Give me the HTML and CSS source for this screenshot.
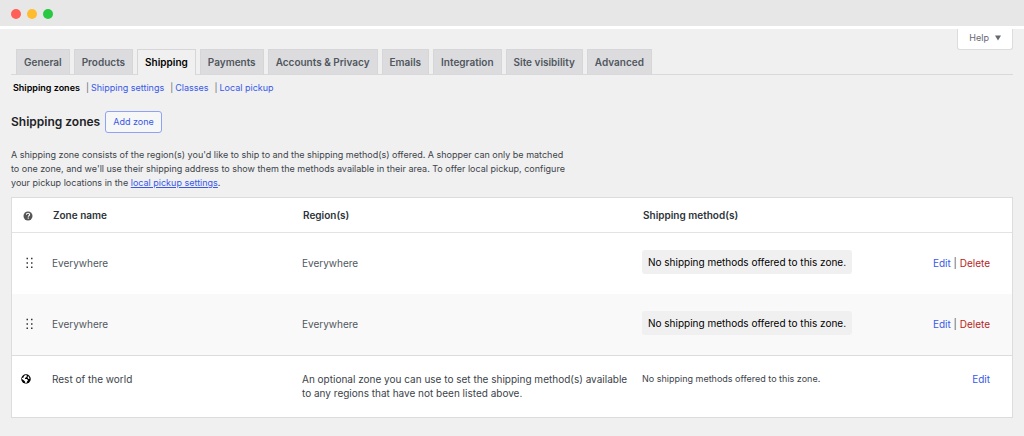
FILE: index.html
```html
<!DOCTYPE html>
<html lang="en">
<head>
    <meta charset="UTF-8">
    <meta name="viewport" content="width=device-width, initial-scale=1.0">
    <title>Shipping zones</title>
    <link rel="stylesheet" href="styles.css">
</head>
<body>

<div class="titlebar">
    <span class="dot red"></span>
    <span class="dot yellow"></span>
    <span class="dot green"></span>
</div>

<main class="page">
    <div class="screen-meta">
        <button type="button" class="help-button">Help
            <svg width="6" height="6" viewBox="0 0 6 6" aria-hidden="true"><path d="M0 0.5h6L3 5.5z" fill="currentColor"/></svg>
        </button>
    </div>

    <nav class="tabs">
        <a href="#general">General</a>
        <a href="#products">Products</a>
        <a href="#shipping" class="active">Shipping</a>
        <a href="#payments">Payments</a>
        <a href="#accounts">Accounts &amp; Privacy</a>
        <a href="#emails">Emails</a>
        <a href="#integration">Integration</a>
        <a href="#visibility">Site visibility</a>
        <a href="#advanced">Advanced</a>
    </nav>

    <ul class="subnav">
        <li><a href="#zones" class="current">Shipping zones</a></li>
        <li><a href="#settings">Shipping settings</a></li>
        <li><a href="#classes">Classes</a></li>
        <li><a href="#pickup">Local pickup</a></li>
    </ul>

    <div class="heading">
        <h2>Shipping zones</h2>
        <button type="button" class="add-button">Add zone</button>
    </div>

    <p class="intro">A shipping zone consists of the region(s) you'd like to ship to and the shipping method(s) offered. A shopper can only be matched to one zone, and we'll use their shipping address to show them the methods available in their area. To offer local pickup, configure your pickup locations in the <a href="#pickup">local pickup settings</a>.</p>

    <table class="zones">
        <thead>
            <tr>
                <th class="col-icon">
                    <svg class="help-icon" width="10" height="10" viewBox="0 0 20 20" role="img" aria-label="Help">
                        <circle cx="10" cy="10" r="9" fill="#555"/>
                        <path d="M6.800 7.600c0-2 1.400-3 3.200-3s3.200 1 3.200 2.700c0 2.200-2.700 2.200-2.700 4.400" fill="none" stroke="#fff" stroke-width="2.200"/>
                        <rect x="9.300" y="13" width="2.400" height="2.400" fill="#fff"/>
                    </svg>
                </th>
                <th class="col-name">Zone name</th>
                <th class="col-region">Region(s)</th>
                <th class="col-methods">Shipping method(s)</th>
                <th class="col-actions"></th>
            </tr>
        </thead>
        <tbody>
            <tr>
                <td class="col-icon">
                    <svg class="drag-icon" width="8" height="12" viewBox="0 0 8 12" aria-hidden="true">
                        <path d="M0.500 0.800h1.500v1.500H0.500zM5 0.800h1.500v1.500H5zM0.500 5.200h1.500v1.500H0.500zM5 5.200h1.500v1.500H5zM0.500 9.600h1.500v1.500H0.500zM5 9.600h1.500v1.500H5z" fill="#333"/>
                    </svg>
                </td>
                <td>Everywhere</td>
                <td>Everywhere</td>
                <td><span class="no-methods">No shipping methods offered to this zone.</span></td>
                <td class="col-actions"><a href="#edit">Edit</a> | <a href="#delete" class="delete">Delete</a></td>
            </tr>
            <tr class="alternate">
                <td class="col-icon">
                    <svg class="drag-icon" width="8" height="12" viewBox="0 0 8 12" aria-hidden="true">
                        <path d="M0.500 0.800h1.500v1.500H0.500zM5 0.800h1.500v1.500H5zM0.500 5.200h1.500v1.500H0.500zM5 5.200h1.500v1.500H5zM0.500 9.600h1.500v1.500H0.500zM5 9.600h1.500v1.500H5z" fill="#333"/>
                    </svg>
                </td>
                <td>Everywhere</td>
                <td>Everywhere</td>
                <td><span class="no-methods">No shipping methods offered to this zone.</span></td>
                <td class="col-actions"><a href="#edit">Edit</a> | <a href="#delete" class="delete">Delete</a></td>
            </tr>
        </tbody>
        <tfoot>
            <tr>
                <td class="col-icon">
                    <svg class="globe-icon" width="10" height="10" viewBox="0 0 20 20" aria-hidden="true">
                        <circle cx="10" cy="10" r="9.500" fill="#000"/>
                        <path d="M9 2l3 1-1 3-3 2 0 2 4 0 2 3-2 2-1 3-2 1-1-4-2-2-4-3 0-2 3-1 1-3z M14 4l2 2 1 4-2 0-2-3z" fill="#fff"/>
                    </svg>
                </td>
                <td>Rest of the world</td>
                <td>An optional zone you can use to set the shipping method(s) available to any regions that have not been listed above.</td>
                <td class="small">No shipping methods offered to this zone.</td>
                <td class="col-actions"><a href="#edit">Edit</a></td>
            </tr>
        </tfoot>
    </table>
</main>

</body>
</html>
```
FILE: styles.css
```css
* {
    box-sizing: border-box;
}

body {
    margin: 0;
    font-family: Inter, "Liberation Sans", sans-serif;
    font-size: 9px;
    line-height: 14px;
    color: #3c434a;
    background: #f0f0f0;
}

a {
    color: #3858e9;
    text-decoration: none;
}

.titlebar {
    display: flex;
    align-items: center;
    gap: 6px;
    height: 29px;
    padding: 2px 11px 0;
    background: #e7e7e7;
    border-bottom: 3px solid #fff;
}

.dot {
    width: 10px;
    height: 10px;
    border-radius: 50%;
}

.red {
    background: #ff5f57;
}

.yellow {
    background: #febc2e;
}

.green {
    background: #28c840;
}

.page {
    padding: 0 11px 18px;
}

.screen-meta {
    display: flex;
    justify-content: flex-end;
    height: 20px;
}

.help-button {
    display: flex;
    align-items: center;
    gap: 6px;
    height: 21px;
    padding: 0 11px 2px;
    font: inherit;
    color: #646970;
    background: #fff;
    border: 1px solid #dcdcde;
    border-top: none;
    border-radius: 0 0 3px 3px;
}

.tabs {
    display: flex;
    gap: 4px;
    padding-left: 5px;
    border-bottom: 1px solid #d9d9db;
}

.tabs a {
    height: 25px;
    padding: 5px 7px 0;
    font-size: 10px;
    font-weight: 600;
    color: #50575e;
    background: #dcdcde;
    border: 1px solid #d6d6d8;
    border-bottom: none;
}

.tabs a.active {
    height: 26px;
    margin-bottom: -1px;
    color: #000;
    background: #f0f0f0;
}

.subnav {
    display: flex;
    margin: 6px 0 0;
    padding: 0 2px;
    list-style: none;
    color: #646970;
}

.subnav li + li::before {
    content: "|";
    margin: 0 2px 0 6px;
}

.subnav .current {
    font-weight: 600;
    color: #000;
}

.heading {
    display: flex;
    align-items: center;
    gap: 5px;
    margin-top: 16px;
}

.heading h2 {
    margin: 0;
    font-size: 12px;
    font-weight: 600;
    color: #1d2327;
}

.add-button {
    height: 22px;
    padding: 0 7px;
    font: inherit;
    color: #3858e9;
    background: #f6f7f7;
    border: 1px solid #8fa2f5;
    border-radius: 3px;
}

.intro {
    max-width: 561px;
    margin: 15px 0 7px;
}

.intro a {
    text-decoration: underline;
}

.zones {
    width: 100%;
    table-layout: fixed;
    border-collapse: separate;
    border-spacing: 0;
    font-size: 10px;
    background: #fff;
    border: 1px solid #dcdcde;
}

.zones th,
.zones td {
    padding: 0;
    text-align: left;
}

.zones th {
    height: 35px;
    font-weight: 600;
    color: #2c3338;
    border-bottom: 1px solid #e3e3e5;
}

.zones th.col-name,
.zones th.col-region,
.zones th.col-methods {
    padding-left: 1px;
}

.zones tbody td {
    height: 61px;
    padding-bottom: 2px;
    color: #50575e;
}

.zones .alternate td {
    background: #f9f9f9;
}

.zones tfoot td {
    height: 62px;
    padding-top: 16px;
    vertical-align: top;
    border-top: 1px solid #dcdcde;
}

.zones .col-icon {
    width: 40px;
    padding-left: 9px;
}

.col-name {
    width: 25%;
}

.col-region {
    width: 34%;
}

.zones td:nth-child(3) {
    padding-right: 8px;
}

.zones .col-actions {
    padding-right: 22px;
    text-align: right;
}

.col-methods {
    width: 23%;
}

.no-methods {
    display: inline-block;
    margin-bottom: 1px;
    padding: 5px 6px;
    color: #000;
    background: #f0f0f0;
    border-radius: 3px;
}

.zones .small {
    font-size: 9px;
}

.zones .delete {
    color: #b81c1c;
}

.zones svg {
    display: block;
}

.zones .help-icon {
    margin-top: 2px;
    margin-left: 2px;
}

.zones .drag-icon {
    margin-left: 5px;
}

.zones .globe-icon {
    margin-top: 2px;
}
```
